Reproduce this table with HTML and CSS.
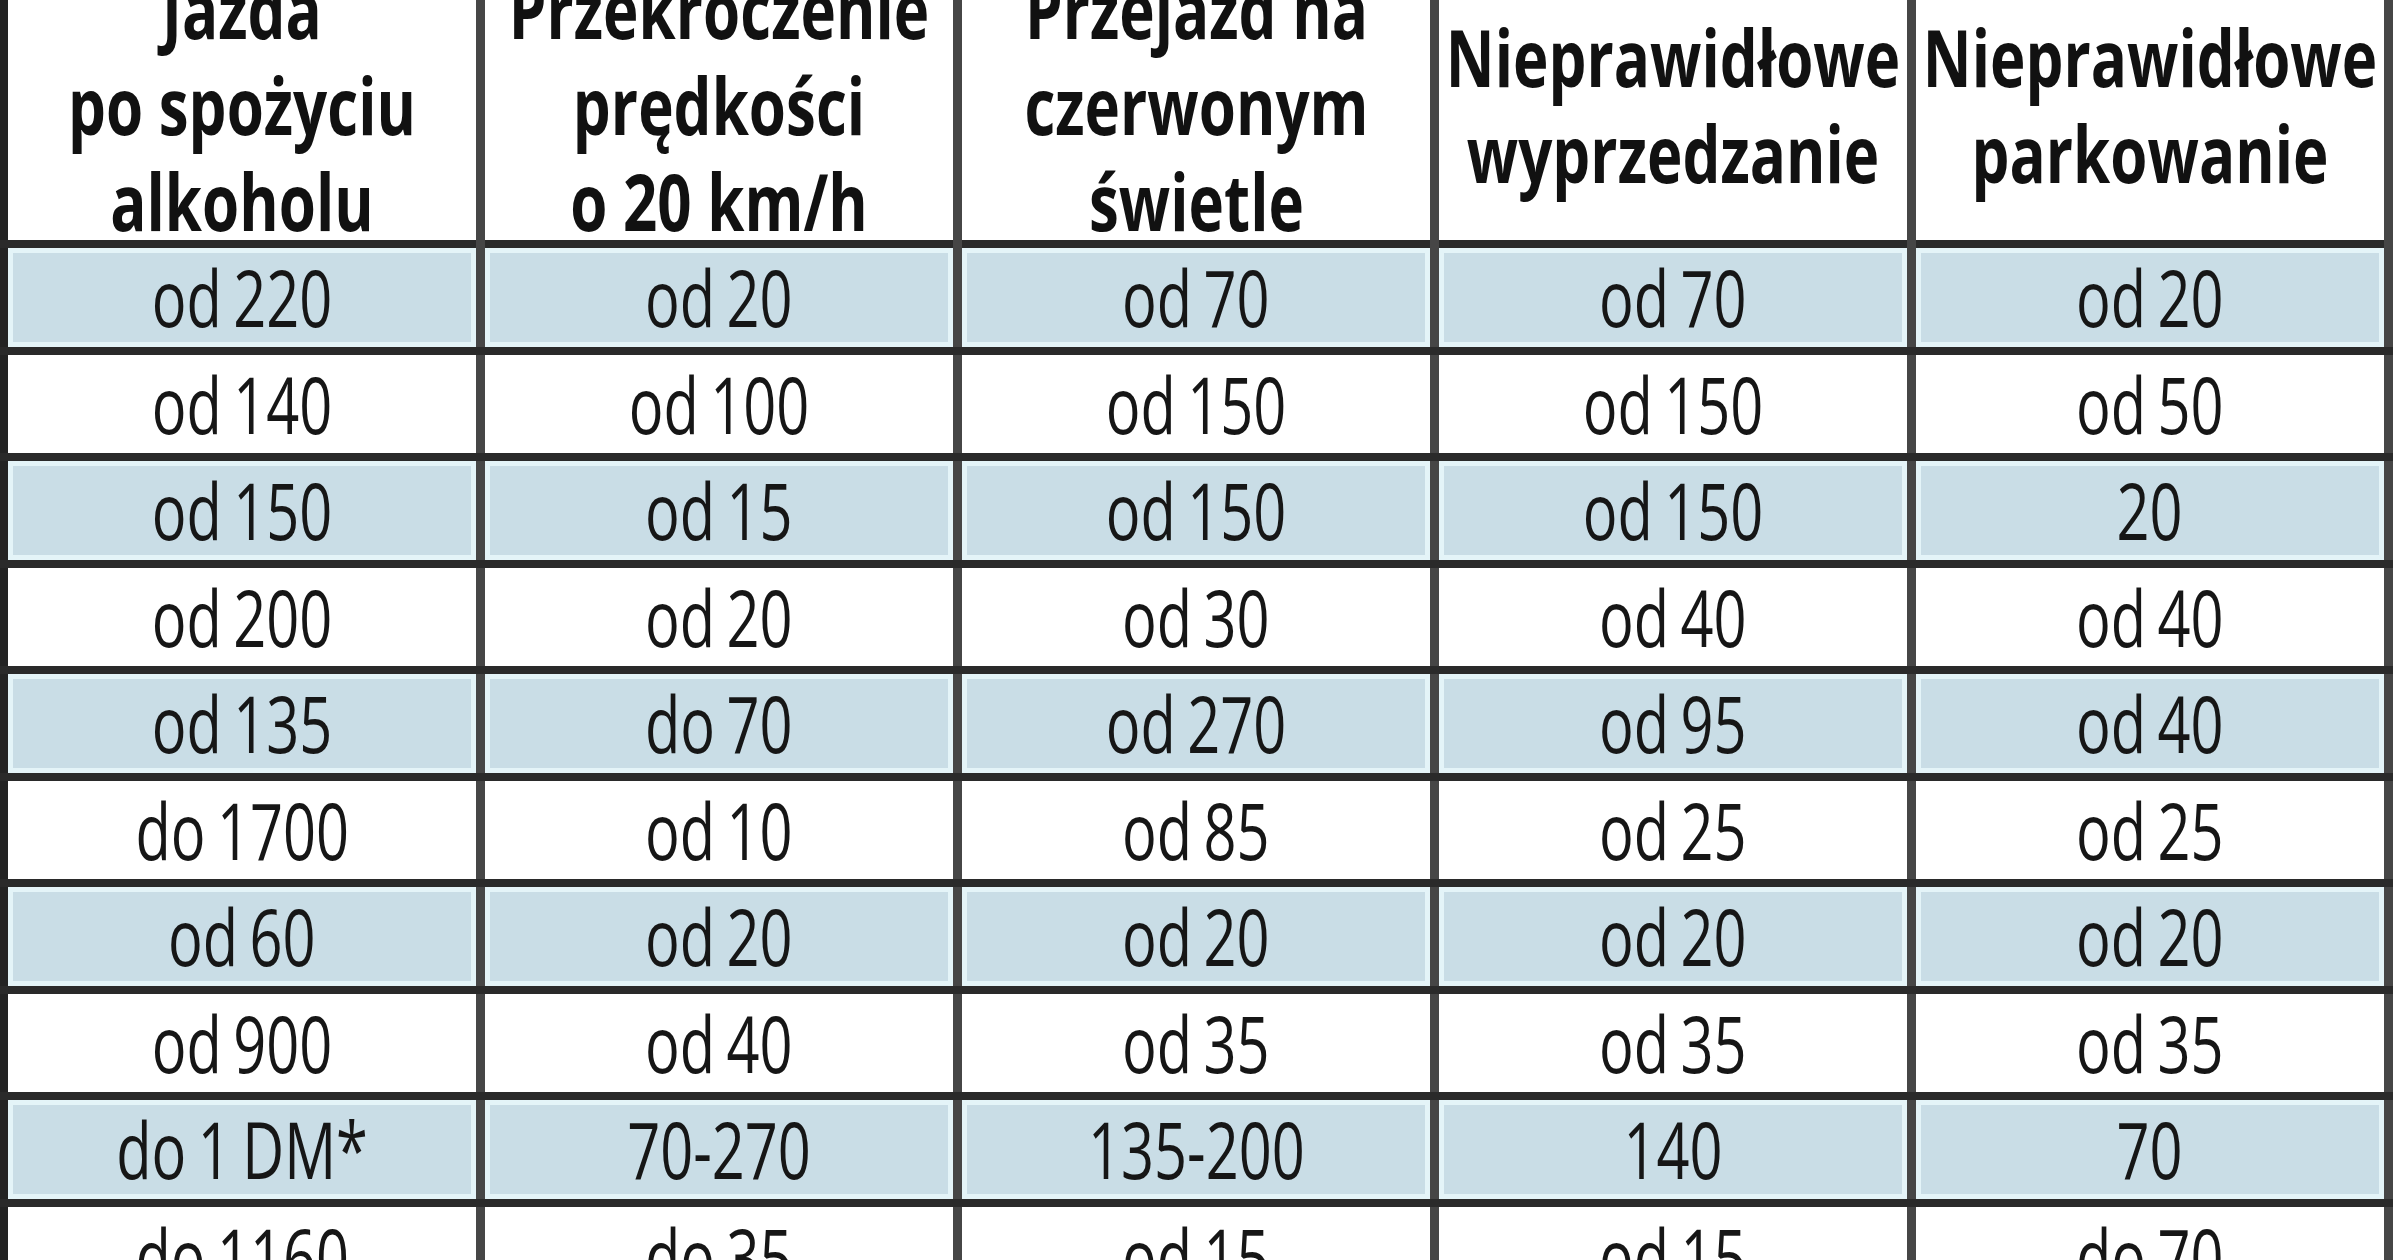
FILE: index.html
```html
<!DOCTYPE html>
<html lang="pl">
<head>
<meta charset="utf-8">
<title>Mandaty</title>
<link rel="stylesheet" href="styles.css">
</head>
<body>
<div class="table">
  <div class="row head">
    <div class="hcell"><span class="t">Jazda<br>po spożyciu<br>alkoholu</span></div>
    <div class="hcell"><span class="t">Przekroczenie<br>prędkości<br>o 20 km/h</span></div>
    <div class="hcell"><span class="t">Przejazd na<br>czerwonym<br>świetle</span></div>
    <div class="hcell two"><span class="t">Nieprawidłowe<br>wyprzedzanie</span></div>
    <div class="hcell two"><span class="t">Nieprawidłowe<br>parkowanie</span></div>
  </div>
  <div class="row blue">
    <div class="cell"><span class="v">od 220</span></div>
    <div class="cell"><span class="v">od 20</span></div>
    <div class="cell"><span class="v">od 70</span></div>
    <div class="cell"><span class="v">od 70</span></div>
    <div class="cell"><span class="v">od 20</span></div>
  </div>
  <div class="row">
    <div class="cell"><span class="v">od 140</span></div>
    <div class="cell"><span class="v">od 100</span></div>
    <div class="cell"><span class="v">od 150</span></div>
    <div class="cell"><span class="v">od 150</span></div>
    <div class="cell"><span class="v">od 50</span></div>
  </div>
  <div class="row blue">
    <div class="cell"><span class="v">od 150</span></div>
    <div class="cell"><span class="v">od 15</span></div>
    <div class="cell"><span class="v">od 150</span></div>
    <div class="cell"><span class="v">od 150</span></div>
    <div class="cell"><span class="v">20</span></div>
  </div>
  <div class="row">
    <div class="cell"><span class="v">od 200</span></div>
    <div class="cell"><span class="v">od 20</span></div>
    <div class="cell"><span class="v">od 30</span></div>
    <div class="cell"><span class="v">od 40</span></div>
    <div class="cell"><span class="v">od 40</span></div>
  </div>
  <div class="row blue">
    <div class="cell"><span class="v">od 135</span></div>
    <div class="cell"><span class="v">do 70</span></div>
    <div class="cell"><span class="v">od 270</span></div>
    <div class="cell"><span class="v">od 95</span></div>
    <div class="cell"><span class="v">od 40</span></div>
  </div>
  <div class="row">
    <div class="cell"><span class="v">do 1700</span></div>
    <div class="cell"><span class="v">od 10</span></div>
    <div class="cell"><span class="v">od 85</span></div>
    <div class="cell"><span class="v">od 25</span></div>
    <div class="cell"><span class="v">od 25</span></div>
  </div>
  <div class="row blue">
    <div class="cell"><span class="v">od 60</span></div>
    <div class="cell"><span class="v">od 20</span></div>
    <div class="cell"><span class="v">od 20</span></div>
    <div class="cell"><span class="v">od 20</span></div>
    <div class="cell"><span class="v">od 20</span></div>
  </div>
  <div class="row">
    <div class="cell"><span class="v">od 900</span></div>
    <div class="cell"><span class="v">od 40</span></div>
    <div class="cell"><span class="v">od 35</span></div>
    <div class="cell"><span class="v">od 35</span></div>
    <div class="cell"><span class="v">od 35</span></div>
  </div>
  <div class="row blue">
    <div class="cell"><span class="v">do 1 DM*</span></div>
    <div class="cell"><span class="v">70-270</span></div>
    <div class="cell"><span class="v">135-200</span></div>
    <div class="cell"><span class="v">140</span></div>
    <div class="cell"><span class="v">70</span></div>
  </div>
  <div class="row">
    <div class="cell"><span class="v">do 1160</span></div>
    <div class="cell"><span class="v">do 35</span></div>
    <div class="cell"><span class="v">od 15</span></div>
    <div class="cell"><span class="v">od 15</span></div>
    <div class="cell"><span class="v">do 70</span></div>
  </div>
</div>
</body>
</html>
```

FILE: styles.css
```css
html, body {
  margin: 0;
  padding: 0;
  background: #ffffff;
  overflow: hidden;
}

body {
  font-family: "Open Sans", "DejaVu Sans", sans-serif;
  color: #1a1a1a;
}

.table {
  width: 2393px;
  margin-top: -46px;
  border-left: 8px solid #232323;
  box-sizing: border-box;
}

.row {
  display: grid;
  grid-template-columns: repeat(5, 477px);
  height: 106.5px;
  border-bottom: 8px solid #2a2a2a;
  box-sizing: border-box;
  margin-left: -8px;
  padding-left: 8px;
  width: 2393px;
}

.row.head {
  height: 294px;
}

.hcell {
  box-sizing: border-box;
  border-right: 9px solid #464646;
  display: flex;
  flex-direction: column;
  align-items: center;
  justify-content: flex-start;
  padding-top: 7px;
  min-width: 0;
}

.hcell.two {
  padding-top: 55px;
}

.cell {
  box-sizing: border-box;
  border-right: 9px solid #464646;
  display: flex;
  align-items: center;
  justify-content: center;
  min-width: 0;
}

.row.blue .cell {
  background: #c9dde6;
  box-shadow: inset 0 0 0 5px #e4f4f8;
}

.t {
  display: block;
  white-space: nowrap;
  text-align: center;
  font-weight: 700;
  font-size: 78px;
  line-height: 96px;
  color: #111111;
  transform: scaleX(0.77);
  flex: none;
}

.v {
  display: inline-block;
  white-space: nowrap;
  font-weight: 400;
  font-size: 78px;
  line-height: 1;
  word-spacing: -0.06em;
  color: #161616;
  transform: scaleX(0.74);
  flex: none;
}
```
